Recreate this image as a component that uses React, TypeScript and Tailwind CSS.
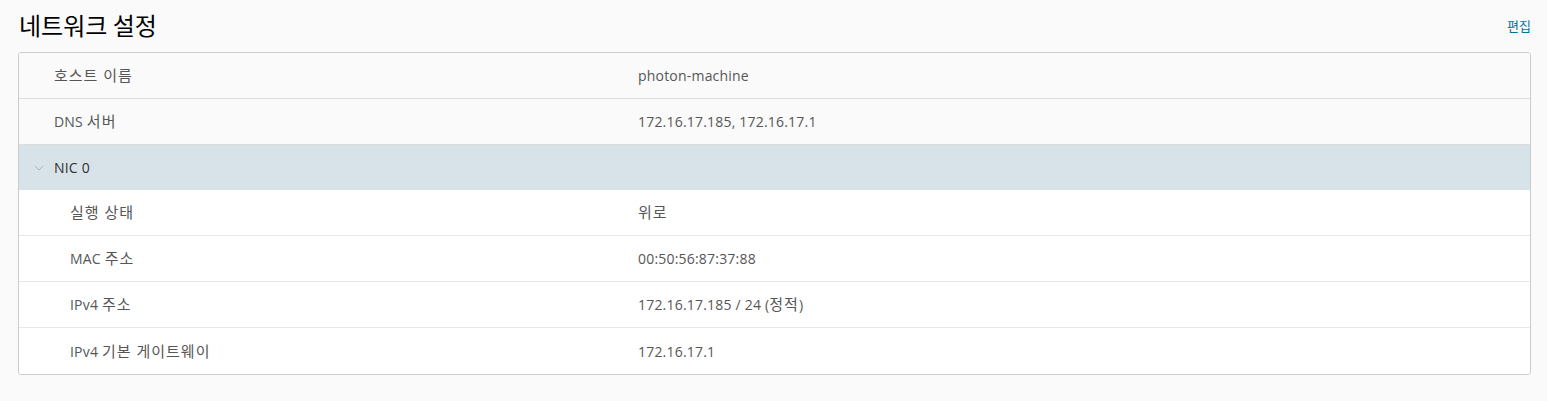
import { ChevronDown } from 'lucide-react';

interface Row {
  label: string;
  value: string;
}

const topRows: Row[] = [
  { label: '호스트 이름', value: 'photon-machine' },
  { label: 'DNS 서버', value: '172.16.17.185, 172.16.17.1' },
];

const nicRows: Row[] = [
  { label: '실행 상태', value: '위로' },
  { label: 'MAC 주소', value: '00:50:56:87:37:88' },
  { label: 'IPv4 주소', value: '172.16.17.185 / 24 (정적)' },
  { label: 'IPv4 기본 게이트웨이', value: '172.16.17.1' },
];

const font = 'font-["Open_Sans","Noto_Sans_CJK_KR",sans-serif]';

// hangul in the original font sits bigger than Noto CJK, so bump those runs a bit
function Text({ children }: { children: string }) {
  const parts = children.split(/([\uac00-\ud7a3]+(?: [\uac00-\ud7a3]+)*)/);
  return (
    <>
      {parts.map((p, i) =>
        /[\uac00-\ud7a3]/.test(p) ? (
          <span key={i} className="text-[15px] tracking-[1px]">{p}</span>
        ) : (
          <span key={i}>{p}</span>
        )
      )}
    </>
  );
}

export default function App() {
  return (
    <div className={`min-h-[401px] w-full bg-[#fafafa] pl-[18px] pr-[16px] pt-[10px] ${font}`}>
      <div className="flex items-center justify-between h-[34px]">
        <h2 className="text-[24px] leading-none text-black pl-[1px] -mt-[4px] font-['Noto_Sans_CJK_KR',sans-serif]">네트워크 설정</h2>
        <a className="text-[13px] text-[#0072a3] -mt-[3px] font-['Noto_Sans_CJK_KR',sans-serif] cursor-pointer">편집</a>
      </div>
      <div className="mt-[8px] border border-[#cccccc] rounded-[3px] overflow-hidden text-[14px] tracking-[0.2px]">
        {topRows.map((r) => (
          <div key={r.label} className="flex h-[46px] items-center bg-[#fafafa] border-b border-[#dddddd] text-[#565656]">
            <div className="w-[619px] pl-[35px]"><Text>{r.label}</Text></div>
            <div><Text>{r.value}</Text></div>
          </div>
        ))}
        <div className="flex h-[45px] items-center bg-[#d8e3e9] text-[#313131]">
          <div className="w-[619px] flex items-center pl-[12px]">
            <ChevronDown className="w-[16px] h-[16px] text-[#8c9ba5] mr-[7px]" strokeWidth={1} />
            <span>NIC 0</span>
          </div>
        </div>
        {nicRows.map((r, i) => (
          <div
            key={r.label}
            className={`flex h-[46px] items-center bg-white text-[#565656] ${i < nicRows.length - 1 ? 'border-b border-[#e8e8e8]' : ''}`}
          >
            <div className="w-[619px] pl-[51px]"><Text>{r.label}</Text></div>
            <div><Text>{r.value}</Text></div>
          </div>
        ))}
      </div>
    </div>
  );
}
